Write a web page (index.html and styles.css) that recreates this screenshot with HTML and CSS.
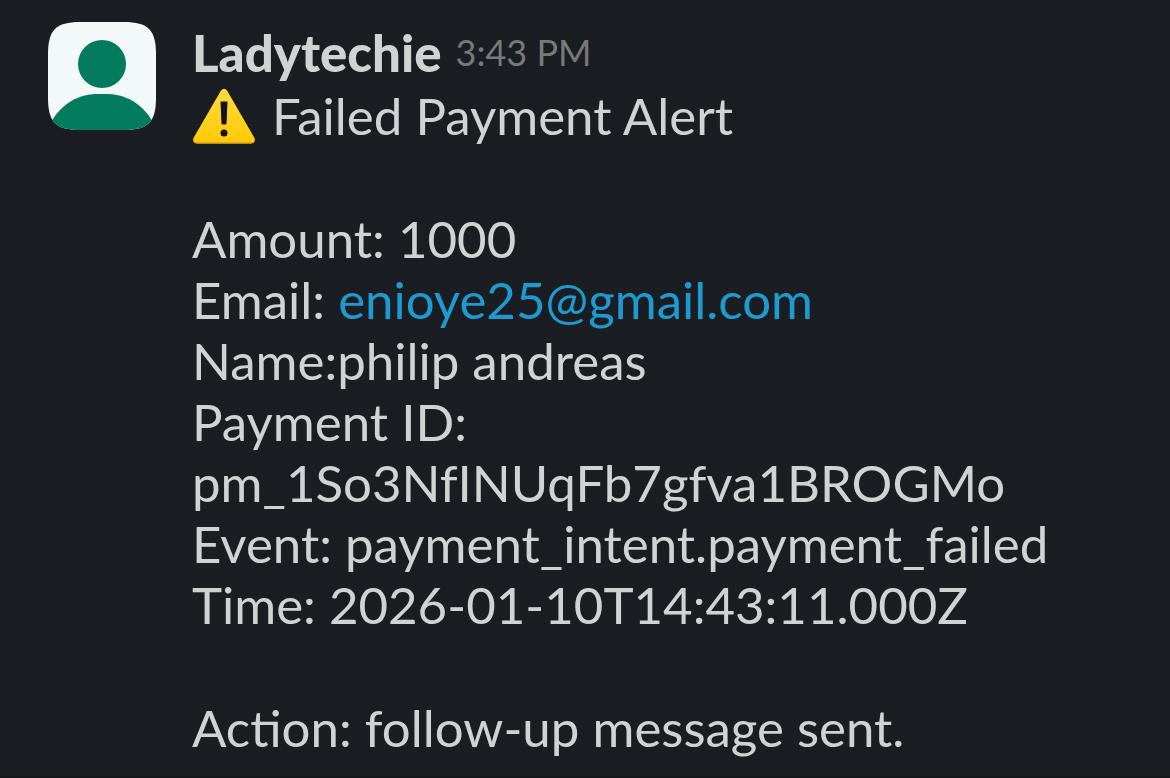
FILE: index.html
```html
<!DOCTYPE html>
<html lang="en">
<head>
    <meta charset="UTF-8">
    <meta name="viewport" content="width=device-width, initial-scale=1.0">
    <title>Failed Payment Alert</title>
    <link rel="stylesheet" href="styles.css">
</head>
<body>
    <article class="message">
        <svg class="avatar" viewBox="0 0 108 108" aria-hidden="true">
            <defs>
                <clipPath id="avatarShape">
                    <path d="M0 32C0 8 8 0 32 0H76C100 0 108 8 108 32V76C108 100 100 108 76 108H32C8 108 0 100 0 76Z"/>
                </clipPath>
            </defs>
            <g clip-path="url(#avatarShape)">
                <rect width="108" height="108" fill="#f3f9f8"/>
                <circle cx="54" cy="42" r="24" fill="#027c5c"/>
                <path d="M0 108C7 86 28 72 48 72h12c20 0 41 14 48 36z" fill="#027c5c"/>
            </g>
        </svg>

        <div class="content">
            <header class="message-header">
                <span class="sender">Ladytechie</span>
                <time class="timestamp">3:43 PM</time>
            </header>

            <div class="message-body">
                <p class="alert-title">
                    <svg class="warning-icon" viewBox="0 0 64 56" aria-hidden="true">
                        <defs>
                            <linearGradient id="warningFill" x1="0" y1="0" x2="0" y2="1">
                                <stop offset="0" stop-color="#ffdc3c"/>
                                <stop offset="1" stop-color="#ffc908"/>
                            </linearGradient>
                        </defs>
                        <path d="M29 2.500Q32-1 35 2.500L62.500 50Q64 55 59 55.500H5Q0 55 1.500 50Z" fill="url(#warningFill)"/>
                        <path d="M5 55.500H59Q61.500 55.300 62.500 54.300H1.500Q2.500 55.300 5 55.500Z" fill="#dfa319"/>
                        <path d="M28.500 13.500h7l-1 22.500q-2.500 1-5 0z" fill="#141414"/>
                        <circle cx="32" cy="45" r="3.500" fill="#141414"/>
                    </svg>
                    <span>Failed Payment Alert</span>
                </p>
                <div class="details">
                    <p>Amount: 1000</p>
                    <p>Email: <a href="mailto:enioye25@gmail.com">enioye25@gmail.com</a></p>
                    <p>Name:philip andreas</p>
                    <p>Payment ID: pm_1So3NfINUqFb7gfva1BROGMo</p>
                    <p>Event: payment_intent.payment_failed</p>
                    <p>Time: 2026-01-10T14:43:11.000Z</p>
                </div>
                <p>Action: follow-up message sent.</p>
            </div>
        </div>
    </article>
</body>
</html>
```
FILE: styles.css
```css
* {
    box-sizing: border-box;
    margin: 0;
    padding: 0;
}

body {
    min-height: 100vh;
    background: #1a1d21;
    color: #d1d2d3;
    font-family: Lato, sans-serif;
    font-size: 51px;
    line-height: 61px;
}

.message {
    display: flex;
    align-items: flex-start;
    gap: 36px;
    padding: 22px 48px 18px;
    border-bottom: 2px solid #17161b;
}

.avatar {
    flex: none;
    width: 108px;
    height: 108px;
}

.content {
    flex: 1;
    min-width: 0;
}

.message-header {
    display: flex;
    align-items: center;
    gap: 14px;
    margin-bottom: 2px;
}

.sender {
    font-weight: 900;
}

.timestamp {
    color: #77797c;
    font-size: 36px;
}

.alert-title {
    display: flex;
    align-items: center;
    gap: 16px;
}

.warning-icon {
    flex: none;
    width: 64px;
    height: 56px;
}

.details {
    margin: 62px 0;
}

a {
    color: #1d9bd1;
    text-decoration: none;
}
```
